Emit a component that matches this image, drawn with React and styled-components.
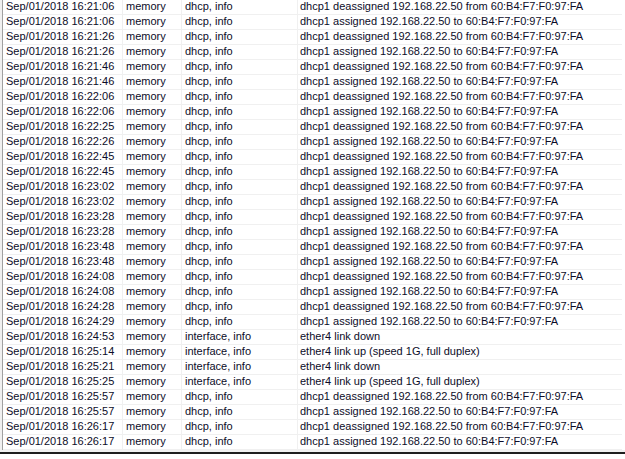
import React from "react";
import styled, { createGlobalStyle } from "styled-components";

const Global = createGlobalStyle`
  html, body { margin: 0; padding: 0; background: #ffffff; }
  body { font-family: "Liberation Sans", Arial, sans-serif; }
`;

const Frame = styled.div`
  width: 625px;
  height: 459px;
  background: #ffffff;
  display: flex;
  flex-direction: column;
`;

const ListArea = styled.div`
  display: flex;
  flex-direction: column;
  border-left: 2px solid #f0f0f0;
`;

const List = styled.div`
  border-left: 1px solid #a0a0a0;
  width: 619px;
  display: flex;
  flex-direction: column;
`;

const Row = styled.div`
  display: grid;
  grid-template-columns: 120px 59px 116px 1fr;
  height: 15px;
  box-sizing: border-box;
  border-bottom: 1px solid #f0f0f0;
`;

const Cell = styled.div`
  box-sizing: border-box;
  padding-left: ${(p) => p.$pad || 3}px;
  border-right: ${(p) => (p.$last ? "none" : "1px solid #f0f0f0")};
  font-size: 11px;
  line-height: 12px;
  color: #0c0c28;
  white-space: nowrap;
  overflow: hidden;
`;

const BottomBar = styled.div`
  height: 2px;
  background: #f0f0f0;
`;

const DarkEdge = styled.div`
  height: 2px;
  background: #1e1e1e;
`;

const MAC = "60:B4:F7:F0:97:FA";
const IP = "192.168.22.50";
const de = `dhcp1 deassigned ${IP} from ${MAC}`;
const as = `dhcp1 assigned ${IP} to ${MAC}`;

const dhcpTimes = [
  ["16:21:06", "16:21:06"],
  ["16:21:26", "16:21:26"],
  ["16:21:46", "16:21:46"],
  ["16:22:06", "16:22:06"],
  ["16:22:25", "16:22:26"],
  ["16:22:45", "16:22:45"],
  ["16:23:02", "16:23:02"],
  ["16:23:28", "16:23:28"],
  ["16:23:48", "16:23:48"],
  ["16:24:08", "16:24:08"],
  ["16:24:28", "16:24:29"],
];

const rows = [];
dhcpTimes.forEach(([a, b]) => {
  rows.push([a, "dhcp, info", de]);
  rows.push([b, "dhcp, info", as]);
});
rows.push(["16:24:53", "interface, info", "ether4 link down"]);
rows.push(["16:25:14", "interface, info", "ether4 link up (speed 1G, full duplex)"]);
rows.push(["16:25:21", "interface, info", "ether4 link down"]);
rows.push(["16:25:25", "interface, info", "ether4 link up (speed 1G, full duplex)"]);
rows.push(["16:25:57", "dhcp, info", de]);
rows.push(["16:25:57", "dhcp, info", as]);
rows.push(["16:26:17", "dhcp, info", de]);
rows.push(["16:26:17", "dhcp, info", as]);

export default function App() {
  return (
    <Frame>
      <Global />
      <ListArea>
        <List>
          {rows.map(([t, topic, msg], i) => (
            <Row key={i}>
              <Cell>Sep/01/2018 {t}</Cell>
              <Cell>memory</Cell>
              <Cell>{topic}</Cell>
              <Cell $last $pad={2}>{msg}</Cell>
            </Row>
          ))}
        </List>
      </ListArea>
      <BottomBar />
      <DarkEdge />
    </Frame>
  );
}
